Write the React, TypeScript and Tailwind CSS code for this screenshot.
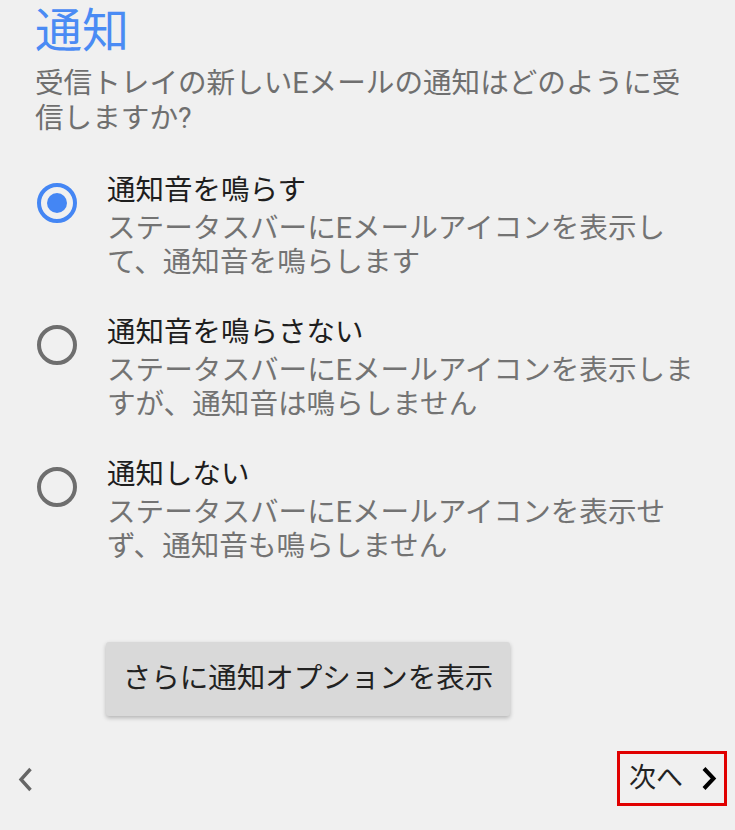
import React from "react";

type Option = {
  title: string;
  lines: string[];
};

const options: Option[] = [
  {
    title: "通知音を鳴らす",
    lines: ["ステータスバーにEメールアイコンを表示し", "て、通知音を鳴らします"],
  },
  {
    title: "通知音を鳴らさない",
    lines: ["ステータスバーにEメールアイコンを表示しま", "すが、通知音は鳴らしません"],
  },
  {
    title: "通知しない",
    lines: ["ステータスバーにEメールアイコンを表示せ", "ず、通知音も鳴らしません"],
  },
];

function Radio({ checked }: { checked: boolean }) {
  return (
    <div
      className={
        "mt-[10px] flex h-[40px] w-[40px] shrink-0 items-center justify-center rounded-full border-[4px] " +
        (checked ? "border-[#4486f4]" : "border-[#6e6e6e]")
      }
    >
      {checked && <div className="h-[20px] w-[20px] rounded-full bg-[#4486f4]" />}
    </div>
  );
}

export default function App() {
  const selected = 0;

  return (
    <div
      className="flex h-[830px] w-full flex-col overflow-hidden bg-[#f0f0f0]"
      style={{ fontFamily: '"Roboto", "Noto Sans CJK JP", sans-serif' }}
    >
      <div className="px-[35px]">
        <h1 className="text-[47px] leading-[62px] text-[#4a8bf4]">通知</h1>
        <p className="mt-[4px] text-[28.6px] leading-[35px] text-[#6f6f6f]">
          受信トレイの新しいEメールの通知はどのように受
          <br />
          信しますか?
        </p>
      </div>

      <div className="mt-[37px] flex flex-col gap-[36px] pl-[37px]">
        {options.map((option, index) => (
          <div key={option.title} className="flex gap-[30px]">
            <Radio checked={index === selected} />
            <div>
              <div className="text-[28.5px] leading-[35px] text-[#1e1e1e]">
                {option.title}
              </div>
              <div className="mt-[3px] text-[28.6px] leading-[34px] text-[#737373]">
                {option.lines.map((line) => (
                  <div key={line}>{line}</div>
                ))}
              </div>
            </div>
          </div>
        ))}
      </div>

      <div className="mt-[79px] pl-[106px]">
        <button className="flex h-[74px] w-[404px] items-center justify-center rounded-[3px] bg-[#d9d9d9] text-[28.5px] text-[#222] shadow-[0_2px_4px_rgba(0,0,0,0.25)]">
          さらに通知オプションを表示
        </button>
      </div>

      <div className="mt-[35px] flex items-center justify-between pl-[18px] pr-[8px]">
        <svg width="15" height="25" viewBox="0 0 15 25" className="mt-[2px]">
          <path
            d="M12.5 2 L3 12.5 L12.5 23"
            fill="none"
            stroke="#666"
            strokeWidth="3.4"
          />
        </svg>
        <div className="flex h-[55px] w-[110px] items-center border-[3px] border-[#e00000] pl-[9px]">
          <span className="text-[27px] leading-none text-[#222]">次へ</span>
          <svg width="18" height="25" viewBox="0 0 18 25" className="ml-[17px]">
            <path
              d="M4 2.5 L13.5 12.5 L4 22.5"
              fill="none"
              stroke="#000"
              strokeWidth="4"
            />
          </svg>
        </div>
      </div>
    </div>
  );
}
